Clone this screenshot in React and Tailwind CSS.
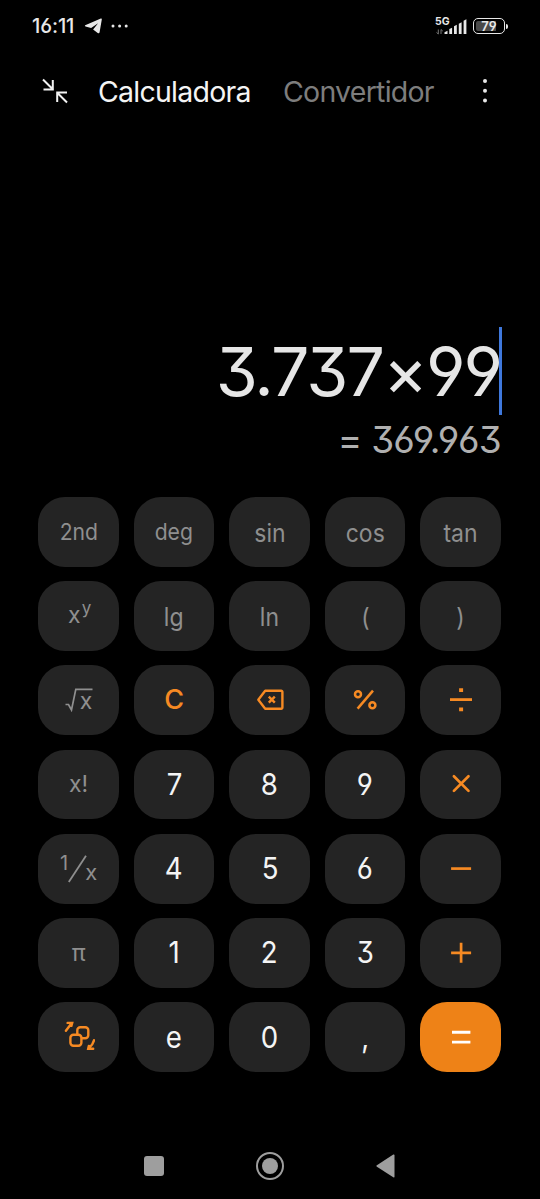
import clsx from 'clsx'

const Stroke = ({ size = 32, width = 2.6, children }) => (
  <svg
    width={size}
    height={size}
    viewBox={`0 0 ${size} ${size}`}
    fill="none"
    stroke="currentColor"
    strokeWidth={width}>
    {children}
  </svg>
)

const BackspaceIcon = () => (
  <Stroke width={2.4}>
    <path
      d="M11.2 6.7h16a1.2 1.2 0 0 1 1.2 1.2v15.600a1.2 1.2 0 0 1-1.2 1.2h-16L4.300 15.700z"
      strokeLinejoin="round"
    />
    <path d="M14.800 12.600l6 6M20.800 12.600l-6 6" />
  </Stroke>
)

const PercentIcon = () => (
  <Stroke width={2.5}>
    <circle cx="9" cy="10.300" r="3" />
    <circle cx="23.400" cy="21.300" r="3" />
    <path d="M24 6.600L8.600 24.600" />
  </Stroke>
)

const DivideIcon = () => (
  <Stroke width={2.8}>
    <path d="M5 15.6h22" />
    <path d="M14.1 6.1h4M14.1 25.3h4" strokeWidth="3.8" />
  </Stroke>
)

const TimesIcon = () => (
  <Stroke width={2.7}>
    <path d="M8.9 8.300l14.600 14.600M23.500 8.300L8.900 22.900" strokeLinecap="round" />
  </Stroke>
)

const MinusIcon = () => (
  <Stroke width={2.7}>
    <path d="M6.1 15.6h20" />
  </Stroke>
)

const PlusIcon = () => (
  <Stroke width={2.7}>
    <path d="M6.1 15.8h20M16.1 5.8v20" />
  </Stroke>
)

const EqualIcon = () => (
  <Stroke width={2.9}>
    <path d="M7 11.3h18.4M7 21.1h18.4" />
  </Stroke>
)

const SwitchIcon = () => (
  <Stroke width={2.4}>
    <rect x="7.4" y="13.8" width="11" height="11" rx="3" />
    <path d="M14.3 13.4V9.3a3 3 0 0 1 3-3h5a3 3 0 0 1 3 3v5a3 3 0 0 1-3 3h-3.6" />
    <path d="M2.900 9.800L8.600 2.200M4.600 1.900h4.600l-.8 3" strokeLinecap="round" />
    <path d="M31 19.200q-1 4.500-5.300 8M30.200 27.800h-5l.6-2.800" strokeLinecap="round" />
  </Stroke>
)

const Root = () => (
  <span className="flex items-start">
    <svg width="28" height="24" viewBox="0 0 28 24" fill="none" stroke="currentColor" strokeWidth="1.7">
      <path d="M0.5 16.500h3l3 5.500L10.800 1.300h16.700" />
    </svg>
    <span className="-ml-[13px] mt-[1px] text-[23px] leading-6">x</span>
  </span>
)

const Reciprocal = () => (
  <span className="flex items-center">
    <span className="-mt-[11px] text-[20px] leading-6">1</span>
    <svg width="19" height="28" viewBox="0 0 19 28" fill="none" stroke="currentColor" strokeWidth="1.8">
      <path d="M0.8 27L18 0.8" />
    </svg>
    <span className="mt-[6px] -ml-[2px] text-[22px] leading-6">x</span>
  </span>
)

const Power = () => (
  <span className="flex items-center pl-0.5">
    <span className="-mt-[2px]">x</span>
    <span className="-mt-[14px] ml-px text-[17px]">y</span>
  </span>
)

const fn = 'text-[#8f8f8f] text-[23px]'
const fnBig = 'text-[#8f8f8f] text-[25px] pt-[3px]'
const num = 'text-[#f4f4f4] text-[30px]'
const op = 'text-[#f68a23]'

const keys = [
  { id: '2nd', style: fn },
  { id: 'deg', style: fn },
  { id: 'sin', style: fnBig },
  { id: 'cos', style: fnBig },
  { id: 'tan', style: fnBig },
  { id: 'power', style: fn, label: <Power /> },
  { id: 'lg', style: fnBig },
  { id: 'ln', style: fnBig },
  { id: '(', style: fnBig },
  { id: ')', style: fnBig },
  { id: 'root', style: fn, label: <Root /> },
  { id: 'C', style: 'text-[#f68a23] text-[27px] font-medium', wide: true },
  { id: 'backspace', style: op, label: <BackspaceIcon /> },
  { id: 'percent', style: op, label: <PercentIcon /> },
  { id: 'divide', style: op, label: <DivideIcon /> },
  { id: 'x!', style: fn, wide: true },
  { id: '7', style: num },
  { id: '8', style: num },
  { id: '9', style: num },
  { id: 'multiply', style: op, label: <TimesIcon /> },
  { id: 'reciprocal', style: fn, label: <Reciprocal /> },
  { id: '4', style: num },
  { id: '5', style: num },
  { id: '6', style: num },
  { id: 'minus', style: op, label: <MinusIcon /> },
  { id: 'π', style: fn, wide: true },
  { id: '1', style: num },
  { id: '2', style: num },
  { id: '3', style: num },
  { id: 'plus', style: op, label: <PlusIcon /> },
  { id: 'switch', style: op, label: <SwitchIcon /> },
  { id: 'e', style: num },
  { id: '0', style: num },
  { id: ',', style: num },
  { id: 'equal', style: 'text-white', label: <EqualIcon /> },
]

const Key = ({ id, style, label, wide }) => (
  <button
    aria-label={id}
    className={clsx(
      'flex items-center justify-center rounded-[27px]',
      id === 'equal' ? 'bg-[#ee8217]' : 'bg-[#242424]',
      style
    )}>
    {label || <span className={wide ? '' : 'scale-x-92'}>{id}</span>}
  </button>
)

const StatusBar = () => (
  <div className="flex h-[52px] items-center justify-between pl-8 pr-8 text-[#e8e8e8]">
    <div className="flex items-center">
      <span className="text-[20px] font-medium tracking-[-0.1px]">16:11</span>
      <svg className="ml-2.5" width="19" height="16" viewBox="0 0 18 16" fill="currentColor">
        <path d="M.7 7.2L16.3.6q1.2-.4 1 .9l-2.2 12.7q-.4 1.6-1.9.7L8.6 11.4l5-6.2-7 4.9L1 8.4q-1.200-.6-.3-1.200z" />
      </svg>
      <svg className="ml-2" width="18" height="4" viewBox="0 0 18 4" fill="currentColor">
        <circle cx="2" cy="2" r="1.500" />
        <circle cx="8.600" cy="2" r="1.500" />
        <circle cx="15.200" cy="2" r="1.500" />
      </svg>
    </div>
    <div className="flex items-center gap-[6px]">
      <div className="relative h-[17px] w-[32px]">
        <span className="absolute -left-px -top-px text-[10.5px] font-bold leading-[9px]">5G</span>
        <svg className="block" width="32" height="17" viewBox="0 0 32 17" fill="currentColor">
          <path d="M8.500 14.300l3-1.500v3.200h-3zM13.300 11l2.800-1.200V16h-2.800zM18 8.200l2.800-1.500V16H18zM22.800 5.700l2.800-1.500V16h-2.800zM27.600 2.700l2.800-1.500V16h-2.800z" />
          <path d="M2.300 11.500v4.500L.5 14.400M5 16v-4.500l1.800 1.600" fill="none" stroke="#777" />
        </svg>
      </div>
      <div className="-ml-px flex items-center gap-px">
        <div className="flex h-4 w-[32px] items-center justify-center rounded-[5px] border-[1.5px] border-[#e8e8e8] p-[2px]">
          <div className="flex h-full w-full items-center justify-center rounded-[2px] bg-linear-to-r from-[#4a4a4a] from-78% to-transparent to-78% text-[13px] font-semibold leading-none">
            79
          </div>
        </div>
        <div className="h-[5px] w-[2px] rounded-r-sm bg-[#e8e8e8]" />
      </div>
    </div>
  </div>
)

const Header = () => (
  <div className="flex h-[78px] items-center pl-[42px] text-[28.500px] tracking-[-0.75px]">
    <svg width="26" height="26" viewBox="0 0 26 26" fill="none" stroke="#f2f2f2" strokeWidth="2">
      <path d="M1 1.500l10.300 10.300M10.800 2v9.500H1.500" />
      <path d="M25 24.500L14.700 14.200M15.200 24v-9.500h9.800" />
    </svg>
    <span className="ml-[30px] mt-[2px] w-[185px] text-[#f4f4f4]">Calculadora</span>
    <span className="mt-[2px] w-[199px] text-[#7d7d7d]">Convertidor</span>
    <svg width="6" height="26" viewBox="0 0 6 26" fill="#e8e8e8">
      <circle cx="3" cy="3" r="2" />
      <circle cx="3" cy="12.800" r="2" />
      <circle cx="3" cy="22.500" r="2" />
    </svg>
  </div>
)

const Display = () => (
  <div className="flex h-[367px] flex-col items-end justify-end pr-[39px]">
    <div className="relative flex h-[88px] items-center">
      <span className="text-[68px] leading-none tracking-[-2px] text-[#e6e6e6]">3.737×99</span>
      <span className="absolute -right-px top-0 h-full w-[3px] bg-[#3f78dc]" />
    </div>
    <div className="mb-[35px] mt-[3px] text-[37px] leading-[44px] tracking-[-0.75px] text-[#b0b0b0]">= 369.963</div>
  </div>
)

const NavBar = () => (
  <div className="flex items-center px-[144px] pt-[80px] text-[#9e9e9e]">
    <div className="h-5 w-5 rounded-[3px] bg-[#9e9e9e]" />
    <div className="ml-[92px] flex h-7 w-7 items-center justify-center rounded-full border-2 border-[#9e9e9e]">
      <div className="h-4 w-4 rounded-full bg-[#9e9e9e]" />
    </div>
    <svg className="ml-[92px] shrink-0" width="19" height="24" viewBox="0 0 19 24" fill="currentColor">
      <path d="M17.300.6q1.200-.5 1.200.8v21.200q0 1.300-1.200.7L.9 12.700q-1-.7 0-1.400z" />
    </svg>
  </div>
)

const App = () => {
  return (
    <div className="h-[1199px] w-[540px] overflow-hidden bg-black font-[Inter,'Noto_Sans',sans-serif] [font-feature-settings:'cv03','cv04','cv09']">
      <StatusBar />
      <Header />
      <Display />
      <div className="ml-[38.4px] grid h-[575px] w-[462.5px] grid-cols-5 grid-rows-7 gap-x-[15px] gap-y-[14.500px]">
        {keys.map((key) => (
          <Key key={key.id} {...key} />
        ))}
      </div>
      <NavBar />
    </div>
  )
}

export default App
